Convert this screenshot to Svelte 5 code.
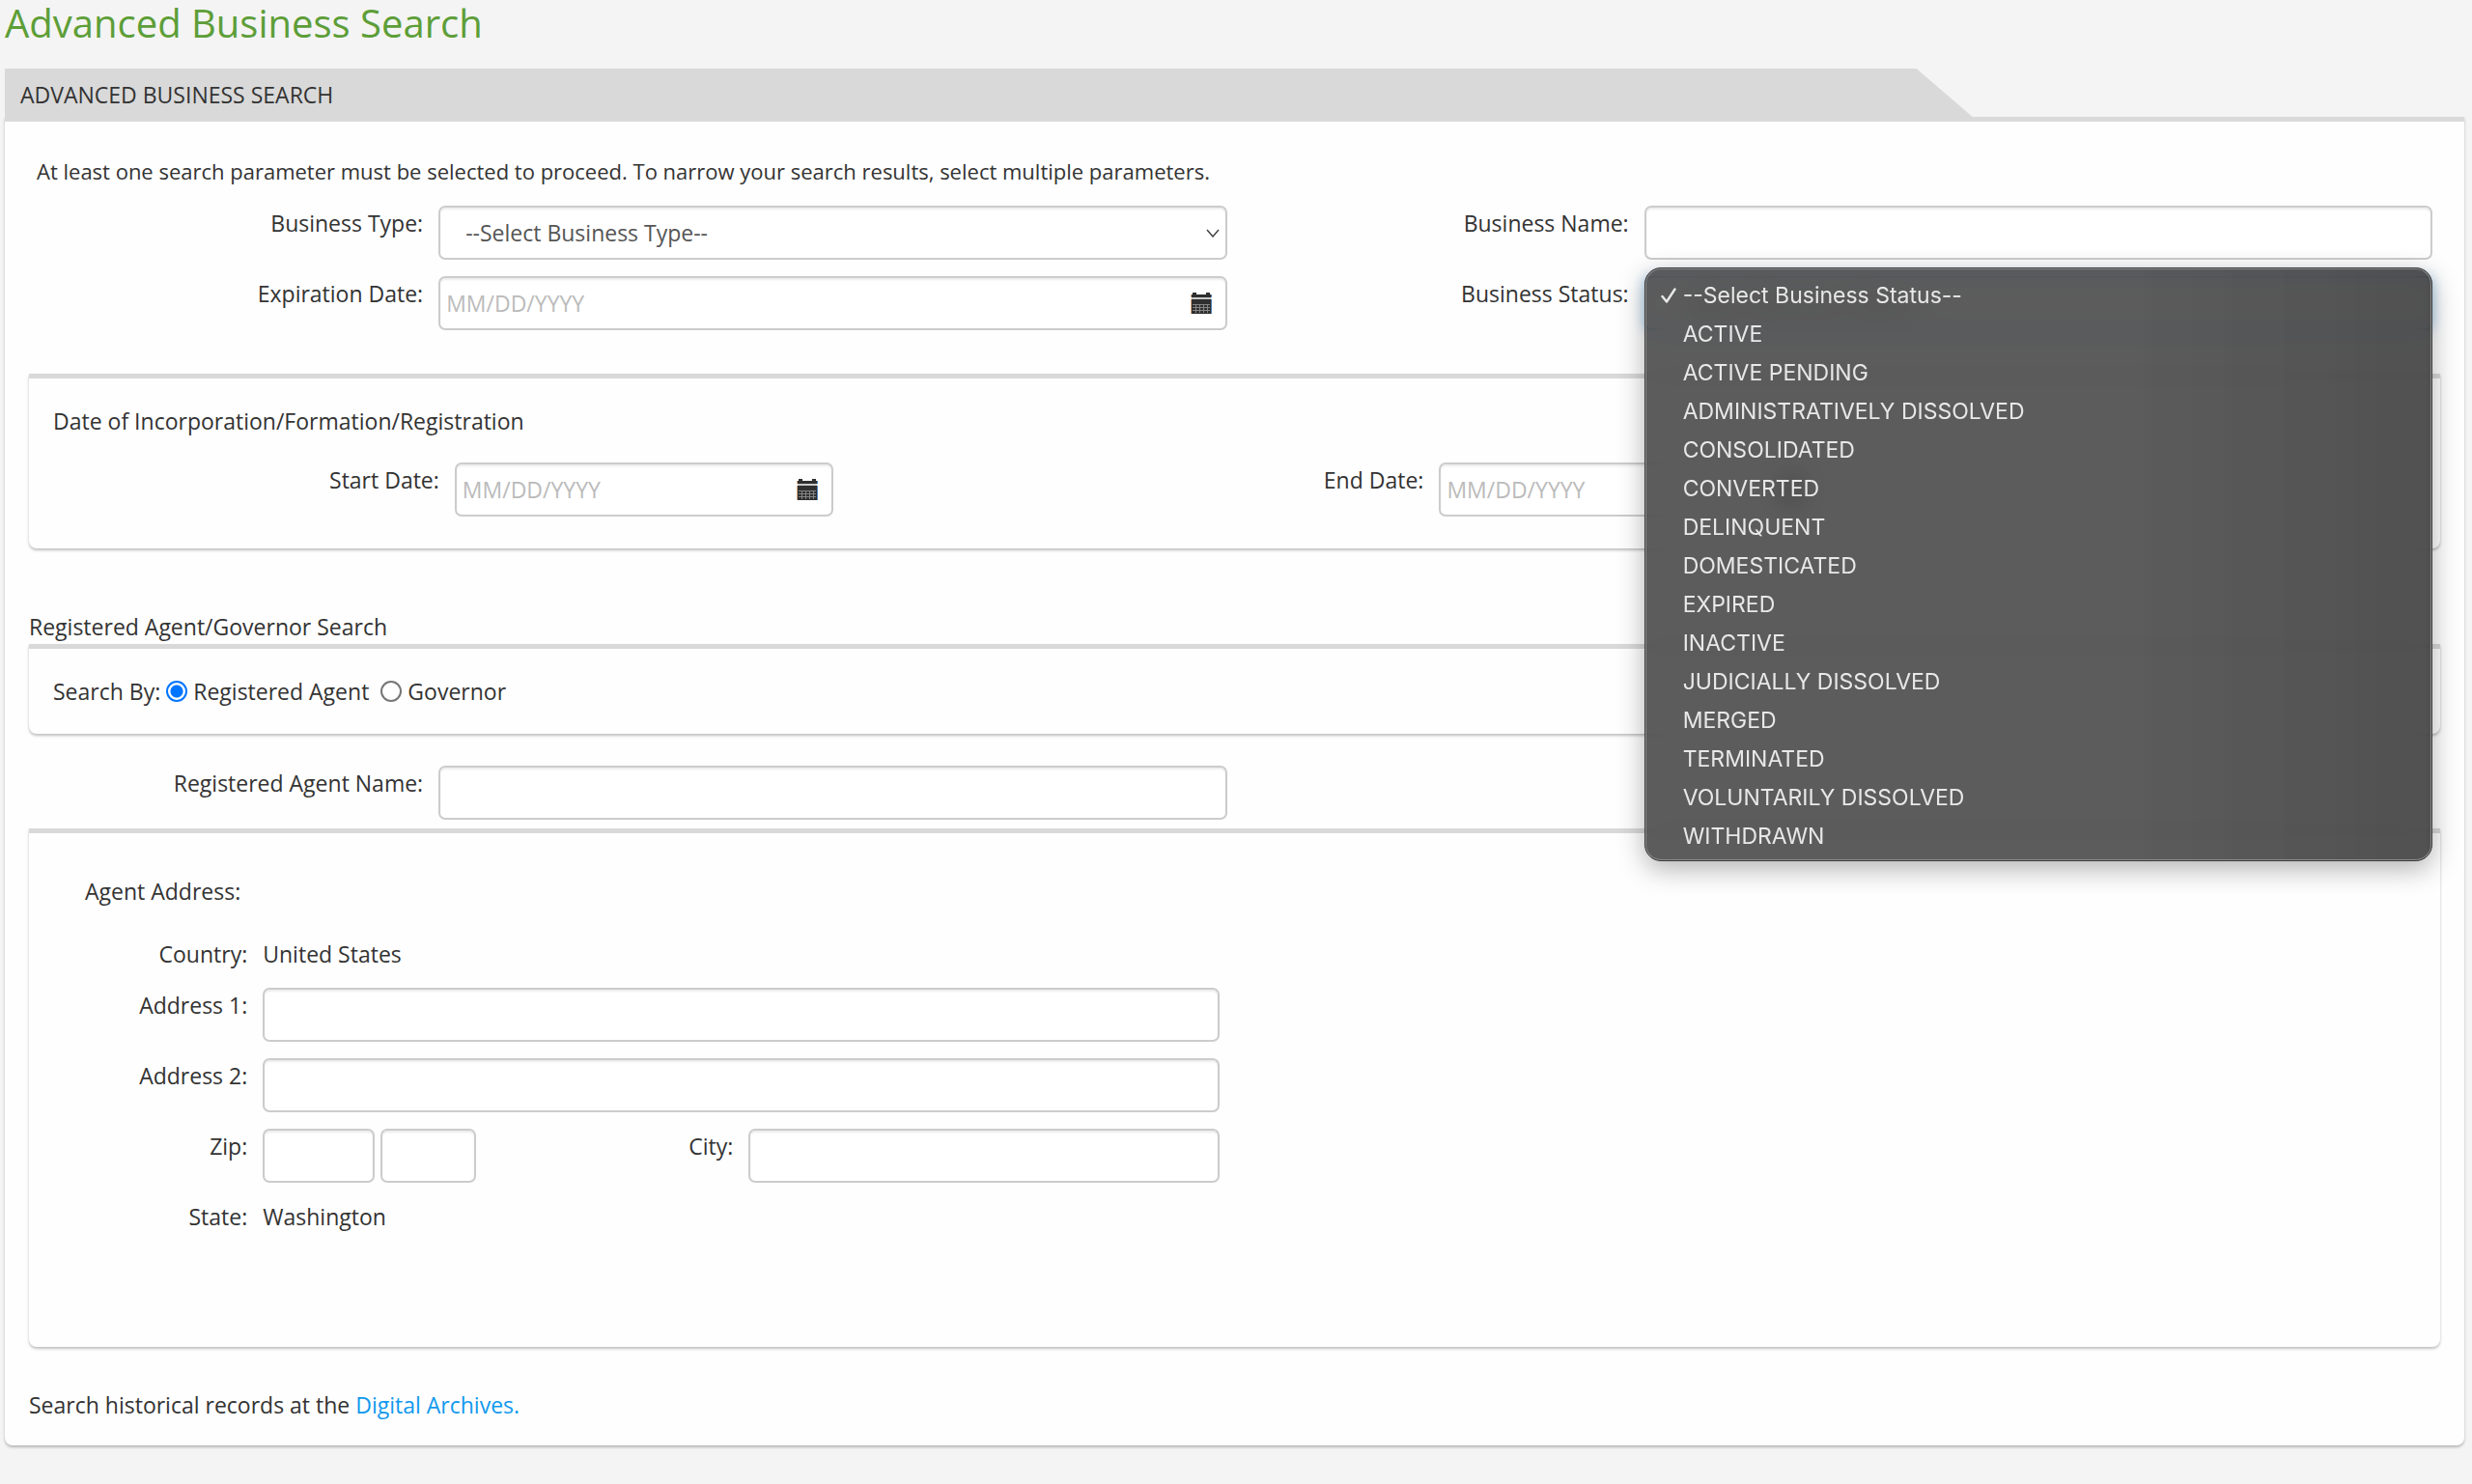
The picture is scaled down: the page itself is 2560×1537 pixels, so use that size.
<script lang="ts">
	const statuses = [
		'--Select Business Status--',
		'ACTIVE',
		'ACTIVE PENDING',
		'ADMINISTRATIVELY DISSOLVED',
		'CONSOLIDATED',
		'CONVERTED',
		'DELINQUENT',
		'DOMESTICATED',
		'EXPIRED',
		'INACTIVE',
		'JUDICIALLY DISSOLVED',
		'MERGED',
		'TERMINATED',
		'VOLUNTARILY DISSOLVED',
		'WITHDRAWN'
	];

	let businessStatus = $state(statuses[0]);
	let menuOpen = $state(true);
	let searchBy = $state('agent');

	function pickStatus(status: string) {
		businessStatus = status;
		menuOpen = false;
	}
</script>

<svelte:head>
	<title>Advanced Business Search</title>
</svelte:head>

{#snippet dateField(id: string)}
	<div class="date-field">
		<input {id} class="control" type="text" placeholder="MM/DD/YYYY" />
		<button type="button" class="calendar-btn" aria-label="Open calendar">
			<svg viewBox="0 0 22 22" width="22" height="22" aria-hidden="true">
				<path fill="#2f2f2f" d="M1 2h1V0h4v2h10V0h4v2h1v3H1z" />
				<path fill="#c9c9c9" d="M1 5h20v2H1z" />
				<path fill="#2f2f2f" d="M1 7h20v15H1z" />
				<path
					stroke="#858585"
					stroke-width="1"
					d="M2 12.500h18M2 15.500h18M2 18.500h18M5.500 12v9M9.500 12v9M13.500 12v9M17.500 12v9"
				/>
				<path fill="#dcae86" d="M0 2h1v3H0zM0 7h1v15H0z" />
				<path fill="#4f83bd" d="M21 2h1v3h-1zM21 7h1v15h-1z" />
			</svg>
		</button>
	</div>
{/snippet}

<main class="page">
	<h1>Advanced Business Search</h1>

	<h2 class="tab">ADVANCED BUSINESS SEARCH</h2>
	<form class="panel">
		<p class="hint">
			At least one search parameter must be selected to proceed. To narrow your search results,
			select multiple parameters.
		</p>

		<div class="row main-row">
			<label for="business-type">Business Type:</label>
			<div class="select-wrap">
				<select id="business-type" class="control">
					<option>--Select Business Type--</option>
				</select>
				<svg class="chevron" viewBox="0 0 14 9" width="14" height="9" aria-hidden="true">
					<path d="M1 1l6 7 6-7" fill="none" stroke="#444" stroke-width="1.500" />
				</svg>
			</div>
			<label for="business-name">Business Name:</label>
			<input id="business-name" class="control" type="text" />

			<label for="expiration-date">Expiration Date:</label>
			{@render dateField('expiration-date')}
			<label for="business-status">Business Status:</label>
			<div class="select-wrap">
				<select id="business-status" class="control open" bind:value={businessStatus}>
					{#each statuses as status}
						<option value={status}>{status}</option>
					{/each}
				</select>
				{#if menuOpen}
					<div class="menu" role="listbox" aria-label="Business Status">
						{#each statuses as status}
							<button
								type="button"
								class="menu-item"
								role="option"
								aria-selected={status === businessStatus}
								onclick={() => pickStatus(status)}
							>
								<span class="tick">
									{#if status === businessStatus}
										<svg viewBox="0 0 16 16" width="16" height="16" aria-hidden="true">
											<path
												d="M1.500 9l4.500 5.500L14.500 1.500"
												fill="none"
												stroke="currentColor"
												stroke-width="2.400"
												stroke-linecap="round"
												stroke-linejoin="round"
											/>
										</svg>
									{/if}
								</span>
								{status}
							</button>
						{/each}
					</div>
				{/if}
			</div>
		</div>

		<section class="box dates">
			<h3>Date of Incorporation/Formation/Registration</h3>
			<div class="row date-row">
				<label for="start-date">Start Date:</label>
				{@render dateField('start-date')}
				<label for="end-date">End Date:</label>
				{@render dateField('end-date')}
			</div>
		</section>

		<h3 class="section-title">Registered Agent/Governor Search</h3>
		<section class="box search-by">
			<span>Search By:</span>
			<label>
				<input type="radio" name="search-by" value="agent" bind:group={searchBy} />
				Registered Agent
			</label>
			<label>
				<input type="radio" name="search-by" value="governor" bind:group={searchBy} />
				Governor
			</label>
		</section>

		<div class="row main-row agent-row">
			<label for="agent-name">Registered Agent Name:</label>
			<input id="agent-name" class="control" type="text" />
		</div>

		<section class="box address">
			<h3>Agent Address:</h3>
			<div class="row address-row text-row">
				<span class="label">Country:</span>
				<span class="value">United States</span>
			</div>
			<div class="row address-row">
				<label for="address-1">Address 1:</label>
				<input id="address-1" class="control wide" type="text" />
				<label for="address-2">Address 2:</label>
				<input id="address-2" class="control wide" type="text" />
				<label for="zip">Zip:</label>
				<div class="zip">
					<input id="zip" class="control" type="text" />
					<input class="control" type="text" aria-label="Zip extension" />
				</div>
				<label for="city">City:</label>
				<input id="city" class="control" type="text" />
				<span class="label">State:</span>
				<span class="value">Washington</span>
			</div>
		</section>

		<p class="archives">
			Search historical records at the <a href="#archives">Digital Archives.</a>
		</p>
	</form>
</main>

<style>
	:global(body) {
		margin: 0;
		background: #f4f4f4;
		color: #333;
		font-family: 'Open Sans', 'Noto Sans', sans-serif;
		font-size: 23px;
		line-height: 32px;
	}

	.page {
		padding: 0 8px 32px 5px;
	}

	h1,
	h2,
	h3,
	p {
		margin: 0;
		font-weight: 400;
		font-size: 23px;
	}

	h1 {
		padding-bottom: 23px;
		color: #5d9e38;
		font-size: 40px;
		line-height: 48px;
	}

	.tab {
		box-sizing: border-box;
		width: 80%;
		height: 50px;
		padding: 11px 16px;
		background: #d9d9d9;
		clip-path: polygon(0 0, calc(100% - 58px) 0, 100% 100%, 0 100%);
	}

	.panel,
	.box {
		border-top: 5px solid #d9d9d9;
		border-radius: 0 0 8px 8px;
		background: #fefefe;
		box-shadow: 0 2px 3px rgba(0, 0, 0, 0.25);
	}

	.panel {
		padding: 35px 25px 26px;
	}

	.hint {
		padding: 0 8px 20px;
		font-size: 22px;
	}

	.row {
		display: grid;
		row-gap: 17px;
	}

	.main-row {
		grid-template-columns: 2fr 4fr 2fr 4fr;
	}

	.row > * {
		min-width: 0;
		margin: 0 8px;
	}

	.row label,
	.label {
		padding-top: 2px;
		text-align: right;
	}

	.value {
		padding-top: 2px;
	}

	.control {
		box-sizing: border-box;
		height: 56px;
		padding: 0 6px;
		border: 2px solid #ccc;
		border-radius: 7px;
		background: #fff;
		box-shadow: inset 0 2px 2px rgba(0, 0, 0, 0.08);
		color: #555;
		font: inherit;
	}

	.control::placeholder {
		color: #bbb;
		opacity: 1;
	}

	.select-wrap,
	.date-field {
		position: relative;
	}

	.select-wrap .control,
	.date-field .control {
		display: block;
		width: 100%;
	}

	select.control {
		padding: 0 26px;
		appearance: none;
	}

	.control.open {
		border-color: #66afe9;
		box-shadow: 0 0 13px rgba(102, 175, 233, 0.6);
	}

	.chevron {
		position: absolute;
		top: 24px;
		right: 8px;
		pointer-events: none;
	}

	.calendar-btn {
		position: absolute;
		top: 17px;
		right: 16px;
		width: 22px;
		height: 22px;
		padding: 0;
		border: 0;
		background: none;
		cursor: pointer;
	}

	.calendar-btn svg {
		display: block;
	}

	.menu {
		position: absolute;
		z-index: 10;
		top: -9px;
		left: 0;
		right: 0;
		padding: 8px 0 5px;
		border: 1px solid #3a3a3a;
		border-radius: 17px;
		background:
			linear-gradient(90deg, transparent 60%, rgba(0, 0, 0, 0.12)), rgba(63, 63, 63, 0.85);
		box-shadow:
			inset 0 0 0 1px #8c8c8c,
			0 8px 28px rgba(0, 0, 0, 0.3);
		backdrop-filter: blur(12px);
	}

	.menu-item {
		display: flex;
		align-items: center;
		width: 100%;
		height: 40px;
		padding: 0 16px;
		border: 0;
		background: none;
		color: #e8e8e8;
		font-family: Inter, Roboto, sans-serif;
		font-size: 23px;
		text-align: left;
	}

	.tick {
		width: 23px;
		flex: none;
	}

	.tick svg {
		display: block;
	}

	.dates {
		margin-top: 45px;
		padding: 28px 25px 33px;
	}

	.date-row {
		grid-template-columns: 2fr 2fr 3fr 2fr 3fr;
		padding-top: 27px;
	}

	.section-title {
		padding: 65px 0 2px;
	}

	.search-by {
		display: flex;
		align-items: center;
		gap: 12px;
		padding: 28px 25px;
	}

	.search-by span {
		margin-right: -6px;
	}

	.search-by label {
		display: flex;
		align-items: center;
		gap: 6px;
	}

	input[type='radio'] {
		width: 22px;
		height: 22px;
		margin: 0;
		border: 2px solid #767676;
		border-radius: 50%;
		background: #fff;
		appearance: none;
	}

	input[type='radio']:checked {
		border-color: #0075ff;
		background: radial-gradient(circle, #0075ff 6px, #fff 7px);
	}

	.agent-row {
		padding: 33px 0 9px;
	}

	.address {
		padding: 44px 49px 119px 33px;
	}

	.address h3 {
		padding: 0 25px 31px;
	}

	.address-row {
		width: 50%;
		grid-template-columns: 2fr 3fr 2fr 5fr;
	}

	.text-row {
		padding-bottom: 19px;
	}

	.wide {
		grid-column: span 3;
	}

	.zip {
		display: flex;
		gap: 6px;
	}

	.zip .control {
		width: 99px;
	}

	.zip .control:first-child {
		width: 116px;
	}

	.archives {
		padding-top: 44px;
	}

	a {
		color: #1199ee;
		text-decoration: none;
	}
</style>
